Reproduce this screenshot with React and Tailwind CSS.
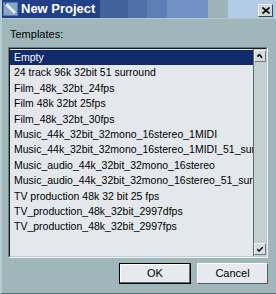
import React from 'react';

const templates = [
  'Empty',
  '24 track 96k 32bit 51 surround',
  'Film_48k_32bt_24fps',
  'Film 48k 32bt 25fps',
  'Film_48k_32bt_30fps',
  'Music_44k_32bit_32mono_16stereo_1MIDI',
  'Music_44k_32bit_32mono_16stereo_1MIDI_51_surround',
  'Music_audio_44k_32bit_32mono_16stereo',
  'Music_audio_44k_32bit_32mono_16stereo_51_surround',
  'TV production 48k 32 bit 25 fps',
  'TV_production_48k_32bit_2997dfps',
  'TV_production_48k_32bit_2997fps',
];

function ScrollButton({ down }) {
  return (
    <div className="h-[12px] w-[12px] bg-[#d6dcdc] border-t border-l border-[#f4f6f6] border-r border-b border-r-[#6c7c80] border-b-[#6c7c80] flex items-center justify-center">
      <svg width="6" height="5" viewBox="0 0 6 5">
        {down ? (
          <path d="M0 2 L2 4 L6 0" stroke="#000" strokeWidth="1.4" fill="none" />
        ) : (
          <path d="M1 1 L3 1 L5 4 M1 1 L1 3" stroke="#000" strokeWidth="1.4" fill="none" />
        )}
      </svg>
    </div>
  );
}

export default function App() {
  const selected = 0;

  return (
    <div
      className="w-[276px] h-[294px] bg-[#9fb7bb] flex flex-col border-l-2 border-[#b8cccf] border-b border-b-[#5c6c70] overflow-hidden"
      style={{ fontFamily: '"Liberation Sans", Arial, sans-serif' }}
    >
      {/* title bar */}
      <div className="relative h-[18px] flex shrink-0 -ml-[2px]">
        <div className="w-[100px] bg-[#21408a]" />
        <div className="w-[28px] bg-[#42629c]" />
        <div className="w-[19px] bg-[#5070aa]" />
        <div className="w-[20px] bg-[#5e7eb6]" />
        <div className="w-[41px] bg-[#7292c6]" />
        <div className="w-[20px] bg-[#9cb4b8]" />
        <div className="flex-1 bg-[#b2cce8]" />
        <div className="absolute left-[3px] top-[2px] flex items-center gap-[3px]">
          <svg width="15" height="14" viewBox="0 0 15 14">
            <rect x="0" y="0" width="15" height="14" fill="#5878a8" />
            <rect x="1" y="1" width="13" height="12" fill="#8aa6cc" />
            <path d="M2 3 L11 12 L13 10 L4 1 Z" fill="#e8eef6" />
            <path d="M2 1 L4 1 L2 3 Z" fill="#2a4a84" />
          </svg>
          <span className="text-white font-bold text-[13px] leading-[14px]">New Project</span>
        </div>
        <div className="absolute left-[258px] top-[4px] w-[15px] h-[13px] bg-[#d2d8da] border-t border-l border-[#f0f2f2] border-r border-b border-r-[#3c4448] border-b-[#3c4448] flex items-center justify-center">
          <svg width="8" height="7" viewBox="0 0 8 7">
            <path d="M0.5 0.5 L7.5 6.5 M7.5 0.5 L0.5 6.5" stroke="#000" strokeWidth="1.6" />
          </svg>
        </div>
      </div>
      <div className="h-px bg-[#b4c8cc] -ml-[2px]" />

      {/* label */}
      <div className="pl-[8px] pt-[9px] h-[28px] text-[11px] leading-[13px] text-black">Templates:</div>

      {/* list box */}
      <div className="ml-[6px] w-[260px] h-[211px] border-t border-l border-[#6a7e82] border-r border-b border-r-[#eef2f2] border-b-[#eef2f2]">
        <div className="h-full flex border-t border-l border-[#141c20] border-r border-b border-r-[#c4ccce] border-b-[#c4ccce] bg-[#e4e8ec]">
          <div className="flex-1 pt-px overflow-hidden">
            {templates.map((t, i) => (
              <div
                key={t}
                className={
                  'h-[15.4px] pl-[4px] text-[10.5px] leading-[15px] whitespace-nowrap ' +
                  (i === selected ? 'bg-[#102a6c] text-white' : 'text-black')
                }
              >
                {t}
              </div>
            ))}
          </div>
          <div className="w-[13px] flex flex-col bg-[#c2d0d2] border-l border-[#5c6c70] py-px">
            <ScrollButton />
            <div className="flex-1" />
            <ScrollButton down />
          </div>
        </div>
      </div>

      {/* buttons */}
      <div className="flex justify-end gap-[6px] pr-[8px] pt-[5px]">
        <button className="w-[72px] h-[21px] bg-[#e6eaee] border border-black shadow-[inset_-1px_-1px_0_#5c6c70,inset_1px_1px_0_#ffffff] text-[11px] text-black">
          OK
        </button>
        <button className="w-[71px] h-[21px] bg-[#e6eaee] border-t border-l border-[#ffffff] border-r border-b border-r-[#4c5c60] border-b-[#4c5c60] text-[11px] text-black">
          Cancel
        </button>
      </div>
    </div>
  );
}
